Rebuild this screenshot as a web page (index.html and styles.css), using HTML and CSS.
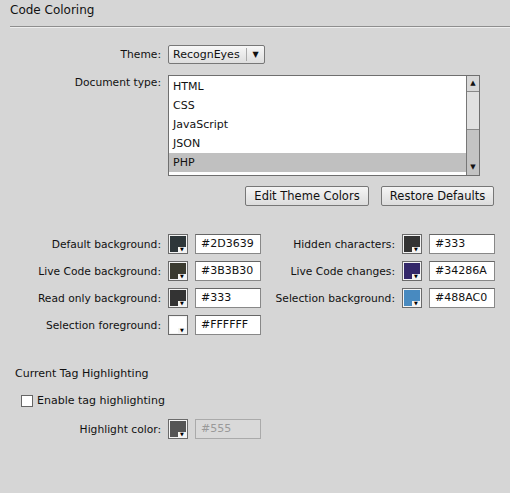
FILE: index.html
```html
<!DOCTYPE html>
<html>
<head>
<meta charset="utf-8">
<link rel="stylesheet" href="styles.css">
</head>
<body>
<div class="panel">
  <div class="title">Code Coloring</div>
  <div class="rule"></div>

  <div class="form">
    <div class="label">Theme:</div>
    <div class="select">
      <span class="select-text">RecognEyes</span>
      <span class="select-arrow">&#9660;</span>
    </div>

    <div class="label label-top">Document type:</div>
    <div class="list">
      <div class="list-items">
        <div class="item">HTML</div>
        <div class="item">CSS</div>
        <div class="item">JavaScript</div>
        <div class="item">JSON</div>
        <div class="item selected">PHP</div>
      </div>
      <div class="scrollbar">
        <div class="sb-btn sb-up">&#9650;</div>
        <div class="sb-thumb"></div>
        <div class="sb-track"></div>
        <div class="sb-btn sb-down">&#9660;</div>
      </div>
    </div>

    <div class="buttons">
      <div class="button btn-edit">Edit Theme Colors</div>
      <div class="button btn-restore">Restore Defaults</div>
    </div>
  </div>

  <div class="colors">
    <div class="label">Default background:</div>
    <div class="swatch"><span class="fill c-2d3639"></span><span class="notch">&#9660;</span></div>
    <div class="field">#2D3639</div>
    <div class="label">Hidden characters:</div>
    <div class="swatch"><span class="fill c-333"></span><span class="notch">&#9660;</span></div>
    <div class="field">#333</div>

    <div class="label">Live Code background:</div>
    <div class="swatch"><span class="fill c-3b3b30"></span><span class="notch">&#9660;</span></div>
    <div class="field">#3B3B30</div>
    <div class="label">Live Code changes:</div>
    <div class="swatch"><span class="fill c-34286a"></span><span class="notch">&#9660;</span></div>
    <div class="field">#34286A</div>

    <div class="label">Read only background:</div>
    <div class="swatch"><span class="fill c-333"></span><span class="notch">&#9660;</span></div>
    <div class="field">#333</div>
    <div class="label">Selection background:</div>
    <div class="swatch"><span class="fill c-488ac0"></span><span class="notch">&#9660;</span></div>
    <div class="field">#488AC0</div>

    <div class="label">Selection foreground:</div>
    <div class="swatch"><span class="fill c-fff"></span><span class="notch">&#9660;</span></div>
    <div class="field">#FFFFFF</div>
  </div>

  <div class="subtitle">Current Tag Highlighting</div>
  <div class="check-row">
    <span class="checkbox"></span>
    <span class="check-label">Enable tag highlighting</span>
  </div>
  <div class="highlight">
    <div class="label">Highlight color:</div>
    <div class="swatch"><span class="fill c-555"></span><span class="notch">&#9660;</span></div>
    <div class="field disabled">#555</div>
  </div>
</div>
</body>
</html>
```

FILE: styles.css
```css
html, body {
  margin: 0;
  padding: 0;
  background: #d6d6d6;
}

body {
  font-family: "DejaVu Sans", "Open Sans", sans-serif;
  font-size: 10.7px;
  color: #111;
  width: 510px;
  height: 493px;
  overflow: hidden;
}

.panel {
  display: flex;
  flex-direction: column;
}

.title {
  font-size: 12px;
  padding: 3px 0 0 10px;
  height: 20px;
  line-height: 15px;
}

.rule {
  margin-left: 10px;
  height: 1px;
  background: #8e8e8e;
  border-bottom: 1px solid #eeeeee;
  margin-top: 3px;
}

.form {
  display: grid;
  grid-template-columns: 161px 1fr;
  column-gap: 7px;
  row-gap: 11px;
  margin-top: 17px;
}

.label {
  text-align: right;
  white-space: nowrap;
  align-self: center;
}

.label-top {
  align-self: start;
  margin-top: 1px;
}

.select {
  width: 95px;
  height: 17px;
  border: 1px solid #777;
  border-radius: 2px;
  background: linear-gradient(#f7f7f7, #dedede);
  display: flex;
  align-items: center;
  box-sizing: content-box;
}

.select-text {
  flex: 1;
  padding-left: 4px;
  border-right: 1px solid #aaa;
  height: 13px;
  line-height: 13px;
  font-size: 11px;
}

.select-arrow {
  width: 17px;
  text-align: center;
  font-size: 8px;
}

.list {
  width: 310px;
  height: 99px;
  border: 1px solid #6f6f6f;
  background: #fff;
  display: flex;
  box-sizing: content-box;
}

.list-items {
  flex: 1;
  padding-top: 1px;
}

.item {
  height: 19px;
  line-height: 19px;
  padding-left: 4px;
  font-size: 11px;
}

.item.selected {
  background: #c0c0c0;
}

.scrollbar {
  width: 12px;
  border-left: 1px solid #777;
  background: #c3c3c3;
  display: flex;
  flex-direction: column;
}

.sb-btn {
  height: 15px;
  font-size: 7px;
  line-height: 15px;
  text-align: center;
  background: #d8d8d8;
}

.sb-up {
  border-bottom: 1px solid #888;
}

.sb-thumb {
  height: 37px;
  background: #e0e0e0;
  border-bottom: 1px solid #888;
}

.sb-track {
  flex: 1;
}

.sb-down {
  background: #c3c3c3;
}

.buttons {
  grid-column: 2;
  display: flex;
  gap: 12px;
  margin-top: -1px;
  margin-left: 77px;
}

.button {
  height: 18px;
  line-height: 18px;
  border: 1px solid #777;
  border-radius: 2px;
  background: linear-gradient(#f5f5f5, #dcdcdc);
  text-align: center;
  font-size: 11.5px;
  box-sizing: content-box;
}

.btn-edit {
  width: 122px;
}

.btn-restore {
  width: 111px;
}

.colors {
  display: grid;
  grid-template-columns: 161px 20px 66px 127px 20px 66px;
  column-gap: 7px;
  row-gap: 7px;
  margin-top: 28px;
}

.swatch {
  width: 20px;
  height: 20px;
  box-sizing: border-box;
  border: 1px solid #6a6a6a;
  background: #f4f4f4;
  padding: 1px;
  position: relative;
}

.fill {
  display: block;
  width: 100%;
  height: 100%;
}

.notch {
  position: absolute;
  right: 1px;
  bottom: 1px;
  width: 8px;
  height: 5px;
  background: #f4f4f4;
  font-size: 5px;
  line-height: 5px;
  text-align: center;
  color: #000;
}

.c-2d3639 { background: #2d3639; }
.c-333 { background: #333333; }
.c-3b3b30 { background: #3b3b30; }
.c-34286a { background: #34286a; }
.c-488ac0 { background: #488ac0; }
.c-fff { background: #ffffff; }
.c-555 { background: #555555; }

.field {
  height: 20px;
  line-height: 18px;
  box-sizing: border-box;
  border: 1px solid #888;
  border-top-color: #666;
  background: #fff;
  padding-left: 5px;
  font-size: 11px;
}

.field.disabled {
  background: #d9d9d9;
  border-color: #aaa;
  color: #999;
}

.subtitle {
  margin-top: 31px;
  padding-left: 15px;
  height: 16px;
  line-height: 16px;
  font-size: 11px;
}

.check-row {
  display: flex;
  align-items: center;
  margin-top: 12px;
  padding-left: 21px;
  gap: 4px;
  font-size: 11px;
}

.checkbox {
  width: 12px;
  height: 12px;
  border: 1px solid #666;
  background: #fff;
  box-sizing: border-box;
}

.highlight {
  display: grid;
  grid-template-columns: 161px 20px 66px;
  column-gap: 7px;
  margin-top: 12px;
}
```
